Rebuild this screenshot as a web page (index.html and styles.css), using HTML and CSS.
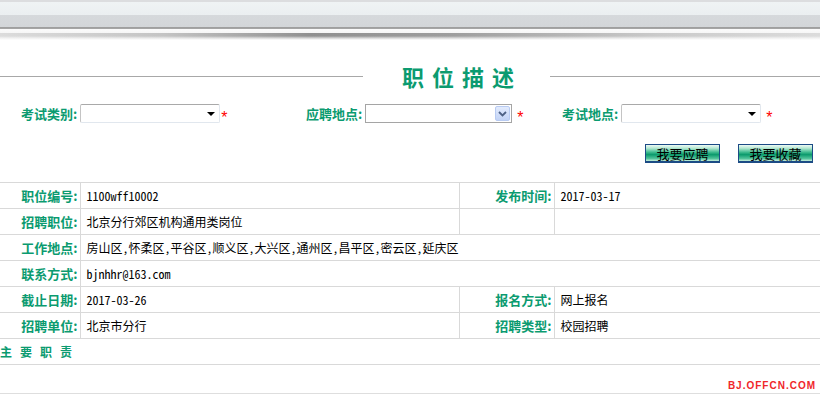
FILE: index.html
```html
<!DOCTYPE html>
<html lang="zh-CN">
<head>
    <meta charset="UTF-8">
    <meta name="viewport" content="width=device-width, initial-scale=1.0">
    <title>职位描述</title>
    <link rel="stylesheet" href="styles.css">
</head>
<body>

<div class="topbar"><div class="topbar-shadow"></div></div>

<div class="title-row">
    <span class="rule rule-left"></span>
    <h1>职位描述</h1>
    <span class="rule rule-right"></span>
</div>

<div class="filters">
    <div class="field field-1">
        <label>考试类别:</label>
        <div class="sel"><span class="tri"></span></div>
        <span class="req">*</span>
    </div>
    <div class="field field-2">
        <label>应聘地点:</label>
        <div class="sel sel-xp">
            <span class="xp-btn">
                <svg width="9" height="6" viewBox="0 0 9 6"><path d="M1 1 L4.5 4.5 L8 1" fill="none" stroke="#4d6185" stroke-width="1.8"/></svg>
            </span>
        </div>
        <span class="req">*</span>
    </div>
    <div class="field field-3">
        <label>考试地点:</label>
        <div class="sel"><span class="tri"></span></div>
        <span class="req">*</span>
    </div>
</div>

<div class="actions">
    <button type="button" class="btn">我要应聘</button>
    <button type="button" class="btn">我要收藏</button>
</div>

<table class="info">
    <colgroup>
        <col style="width:80px">
        <col style="width:379px">
        <col style="width:95px">
        <col>
    </colgroup>
    <tr>
        <th>职位编号:</th>
        <td class="mono">1100wff10002</td>
        <th>发布时间:</th>
        <td class="mono">2017-03-17</td>
    </tr>
    <tr>
        <th>招聘职位:</th>
        <td>北京分行郊区机构通用类岗位</td>
        <td></td>
        <td></td>
    </tr>
    <tr>
        <th>工作地点:</th>
        <td colspan="3" class="mono">房山区,怀柔区,平谷区,顺义区,大兴区,通州区,昌平区,密云区,延庆区</td>
    </tr>
    <tr>
        <th>联系方式:</th>
        <td colspan="3" class="mono">bjnhhr@163.com</td>
    </tr>
    <tr>
        <th>截止日期:</th>
        <td class="mono">2017-03-26</td>
        <th>报名方式:</th>
        <td>网上报名</td>
    </tr>
    <tr>
        <th>招聘单位:</th>
        <td>北京市分行</td>
        <th>招聘类型:</th>
        <td>校园招聘</td>
    </tr>
    <tr>
        <td colspan="4" class="section">主要职责</td>
    </tr>
</table>

<div class="foot"></div>
<div class="watermark">BJ.OFFCN.COM</div>

</body>
</html>
```

FILE: styles.css
```css
body {
    margin: 0;
    padding: 0;
    background-color: #fff;
    font-family: "Noto Sans CJK SC", "Liberation Sans", sans-serif;
    font-size: 12px;
    color: #000;
    position: relative;
    height: 394px;
    overflow: hidden;
}

.topbar {
    height: 40px;
    background: linear-gradient(to bottom,
        #dcdddf 0, #dcdddf 2px,
        #eff3f4 2px, #ebeff1 15px,
        #d6d9dc 15px, #d3d6d9 27px,
        #9c9c9c 27px, #a8a8a8 29px,
        #fbfbfb 29px, #f6f6f6 33px,
        #fff 33px);
    position: relative;
}

.topbar-shadow {
    position: absolute;
    left: 0;
    right: 0;
    top: 33px;
    height: 7px;
    background:
        linear-gradient(to bottom, rgba(255,255,255,0) 0, rgba(255,255,255,0) 3px, rgba(255,255,255,0.6) 5px, rgba(255,255,255,1) 7px),
        linear-gradient(to right, #dcdcdc 0, #c4c4c4 20%, #909090 38%, #9e9e9e 55%, #cacaca 80%, #dcdcdc 100%);
}

.title-row {
    display: flex;
    align-items: center;
    margin-top: 24px;
    height: 24px;
}

.rule {
    height: 1px;
    background-color: #a8a8a8;
}

.rule-left {
    width: 363px;
}

.rule-right {
    flex: 1;
}

h1 {
    margin: 0 28px 0 39px;
    font-size: 22px;
    font-weight: bold;
    letter-spacing: 8px;
    color: #0b9b70;
    line-height: 24px;
    white-space: nowrap;
}

.filters {
    display: flex;
    margin-top: 16px;
    padding-left: 21px;
    height: 19px;
}

.field {
    display: flex;
    align-items: center;
}

.field-1 {
    width: 285px;
}

.field-2 {
    width: 256px;
}

.field label {
    font-size: 13px;
    font-weight: bold;
    color: #0b9b70;
    margin-right: 3px;
    white-space: nowrap;
}

.sel {
    position: relative;
    width: 140px;
    height: 19px;
    box-sizing: border-box;
    border: 1px solid #e1e7ee;
    border-top-color: #a9a9a9;
    border-left-color: #c4c4c4;
    border-radius: 2px;
    background-color: #fff;
}

.tri {
    position: absolute;
    right: 4px;
    top: 7px;
    width: 0;
    height: 0;
    border-left: 4px solid transparent;
    border-right: 4px solid transparent;
    border-top: 4px solid #000;
}

.sel-xp {
    width: 147px;
    border: 1px solid #a5a5a5;
    border-radius: 0;
}

.xp-btn {
    position: absolute;
    right: 1px;
    top: 1px;
    width: 15px;
    height: 15px;
    box-sizing: border-box;
    border: 1px solid #b8cbf2;
    border-radius: 2px;
    background: linear-gradient(to bottom, #e2ebfd, #c2d3f6);
    display: flex;
    align-items: center;
    justify-content: center;
}

.req {
    color: #f00;
    font-family: "Liberation Sans", sans-serif;
    font-size: 16px;
    margin-left: 1px;
    padding-top: 8px;
}

.field-2 .req,
.field-3 .req {
    margin-left: 5px;
}

.actions {
    display: flex;
    justify-content: flex-end;
    gap: 18px;
    margin-top: 21px;
    padding-right: 7px;
    height: 19px;
}

.btn {
    width: 75px;
    height: 19px;
    padding: 0;
    border: 1px solid #1c4b85;
    border-bottom-width: 2px;
    background: linear-gradient(to bottom, #eefaf4 0, #b5e8d2 20%, #3fbb8f 45%, #0b9a6c 60%, #52c49b 85%, #c9eedd 100%);
    font-family: "Noto Sans CJK SC", sans-serif;
    font-size: 13px;
    line-height: 15px;
    color: #000;
    cursor: pointer;
}

.info {
    width: 100%;
    margin-top: 19px;
    border-collapse: collapse;
    table-layout: fixed;
}

.info th,
.info td {
    height: 25px;
    padding: 0;
    border: 1px solid #d9d9d9;
    font-size: 12px;
    line-height: 16px;
    vertical-align: middle;
}

.info tr > :first-child {
    border-left: none;
}

.info tr > :last-child {
    border-right: none;
}

.info th {
    text-align: right;
    padding-right: 2px;
    font-size: 13px;
    font-weight: bold;
    color: #0b9b70;
    white-space: nowrap;
}

.info td {
    padding-left: 6px;
    white-space: nowrap;
}

.info td.mono {
    font-family: "Noto Sans Mono CJK SC", "Liberation Mono", monospace;
    font-size: 12px;
}

.info td.section {
    padding-left: 0;
    font-weight: bold;
    color: #0b9b70;
    letter-spacing: 8px;
}

.foot {
    margin-top: 28px;
    border-top: 1px solid #dedede;
}

.watermark {
    position: absolute;
    right: 4px;
    top: 379px;
    padding-left: 3px;
    background-color: #fff;
    font-family: "Liberation Sans", sans-serif;
    font-size: 10px;
    font-weight: bold;
    letter-spacing: 1px;
    color: #f0262a;
    line-height: 14px;
}
```
